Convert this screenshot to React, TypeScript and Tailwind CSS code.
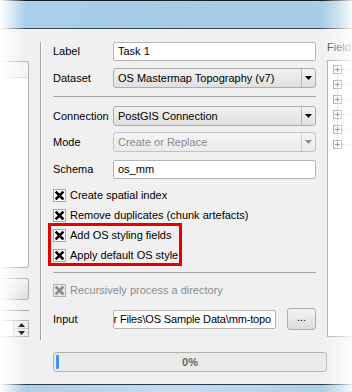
import React from 'react';

function CheckMark({ disabled }: { disabled?: boolean }) {
  return (
    <div
      className={
        'w-[13px] h-[13px] shrink-0 border flex items-center justify-center ' +
        (disabled ? 'border-[#b4b4b4] bg-[#e6e6e6]' : 'border-[#a8a8a8] bg-white')
      }
    >
      <svg width="11" height="11" viewBox="0 0 11 11">
        <path
          d="M2.5 2.5 L8.5 8.5 M8.5 2.5 L2.5 8.5"
          stroke={disabled ? '#8a8a8a' : '#000'}
          strokeWidth="2.5"
          strokeLinecap="square"
        />
      </svg>
    </div>
  );
}

function Check({ label, disabled }: { label: string; disabled?: boolean }) {
  return (
    <div className="flex items-center h-[13px] gap-[4px]">
      <CheckMark disabled={disabled} />
      <span className={'whitespace-nowrap leading-none ' + (disabled ? 'text-[#8d8d8d]' : 'text-black')}>{label}</span>
    </div>
  );
}

function Combo({ text, disabled }: { text: string; disabled?: boolean }) {
  return (
    <div
      className={
        'h-[20px] flex rounded-[3px] border ' +
        (disabled
          ? 'border-[#c3c3c3] bg-linear-to-b from-[#f4f4f4] to-[#ebebeb] text-[#8a8a8a]'
          : 'border-[#acacac] bg-linear-to-b from-[#f2f2f2] to-[#e0e0e0] text-black')
      }
    >
      <div className="flex-1 flex items-center pl-[4px] whitespace-nowrap overflow-hidden">{text}</div>
      <div
        className={
          'w-[14px] flex items-center justify-center border-l ' +
          (disabled ? 'border-[#cfcfcf]' : 'border-[#b9b9b9]')
        }
      >
        <svg width="7" height="4" viewBox="0 0 7 4">
          <path d="M0 0 H7 L3.5 4 Z" fill={disabled ? '#8c8c8c' : '#000'} />
        </svg>
      </div>
    </div>
  );
}

function LineEdit({ children }: { children: React.ReactNode }) {
  return (
    <div className="h-[19px] bg-white border border-[#b5b5b5] rounded-[2px] px-[4px] flex items-center whitespace-nowrap overflow-hidden">
      {children}
    </div>
  );
}

function Row({ label, children, className }: { label: string; children: React.ReactNode; className?: string }) {
  return (
    <div className={'flex items-center ' + (className ?? '')}>
      <div className="w-[60px] shrink-0 whitespace-nowrap">{label}</div>
      <div className="flex-1">{children}</div>
    </div>
  );
}

function TreeItem() {
  return (
    <div className="h-[15px] flex items-center">
      <div className="w-[9px] h-[9px] border border-[#8f8f8f] bg-white flex items-center justify-center relative">
        <div className="absolute w-[5px] h-px bg-[#555]" />
        <div className="absolute w-px h-[5px] bg-[#555]" />
      </div>
      <div className="w-[10px] border-t border-dotted border-[#a0a0a0]" />
    </div>
  );
}

export default function App() {
  return (
    <div className="relative w-[352px] h-[392px] overflow-hidden bg-[#f0f0f0] text-[11px] text-black font-['Liberation_Sans',Arial,sans-serif] flex flex-col">
      {/* window title glass */}
      <div className="h-[29px] shrink-0 border-t border-[#1e1e1e] border-b border-b-[#3b4a58] bg-linear-to-r from-[#a9cfee] via-[#a6cde5] to-[#a8cfe4]" />

      <div className="h-[313px] shrink-0 flex">
        {/* clipped left panel */}
        <div className="w-[29px] shrink-0 flex flex-col">
          <div className="mt-[32px] h-[207px] border border-l-0 border-[#adadad] rounded-r-[3px] bg-white flex flex-col overflow-hidden">
            <div className="h-[16px] bg-[#f4f4f4] border-b border-[#d8d8d8]" />
          </div>
          <div className="mt-[10px] h-[22px] border border-l-0 border-[#acacac] rounded-r-[3px] bg-linear-to-b from-[#f3f3f3] to-[#dedede]" />
          <div className="mt-[10px] h-px bg-[#a0a0a0]" />
          <div className="mt-[9px] h-[17px] flex border border-l-0 border-[#b5b5b5] bg-white">
            <div className="flex-1" />
            <div className="w-[15px] flex flex-col border-l border-[#c8c8c8]">
              <div className="flex-1 flex items-center justify-center bg-[#eeeeee] border-b border-[#c8c8c8]">
                <svg width="7" height="4" viewBox="0 0 7 4">
                  <path d="M0 4 H7 L3.5 0 Z" fill="#000" />
                </svg>
              </div>
              <div className="flex-1 flex items-center justify-center bg-[#eeeeee]">
                <svg width="7" height="4" viewBox="0 0 7 4">
                  <path d="M0 0 H7 L3.5 4 Z" fill="#000" />
                </svg>
              </div>
            </div>
          </div>
        </div>

        {/* splitter line */}
        <div className="ml-[11px] mt-[13px] h-[298px] w-[2px] border-l border-[#a0a0a0] border-r border-r-white" />

        {/* form */}
        <div className="ml-[11px] w-[263px] shrink-0 flex flex-col pt-[13px]">
          <Row label="Label">
            <LineEdit>Task 1</LineEdit>
          </Row>
          <Row label="Dataset" className="mt-[7px]">
            <Combo text="OS Mastermap Topography (v7)" />
          </Row>
          <div className="mt-[8px] h-px bg-[#a8a8a8]" />
          <Row label="Connection" className="mt-[9px]">
            <Combo text="PostGIS Connection" />
          </Row>
          <Row label="Mode" className="mt-[6px]">
            <Combo text="Create or Replace" disabled />
          </Row>
          <Row label="Schema" className="mt-[8px]">
            <LineEdit>os_mm</LineEdit>
          </Row>

          <div className="mt-[10px] flex flex-col gap-[7px]">
            <Check label="Create spatial index" />
            <Check label="Remove duplicates (chunk artefacts)" />
          </div>
          <div className="relative mt-[7px] flex flex-col gap-[7px]">
            <Check label="Add OS styling fields" />
            <Check label="Apply default OS style" />
            <div className="absolute left-[-5px] top-[-6px] w-[134px] h-[43px] border-[3px] border-[#e60000]" />
          </div>

          <div className="mt-[10px] h-px bg-[#a8a8a8]" />
          <div className="mt-[11px]">
            <Check label="Recursively process a directory" disabled />
          </div>

          <div className="mt-[11px] h-[22px] flex items-center">
            <div className="w-[60px] shrink-0">Input</div>
            <div className="w-[163px] h-[19px] bg-white border border-[#b5b5b5] rounded-[2px] pr-[4px] flex items-center justify-end whitespace-nowrap overflow-hidden">
              <span className="shrink-0 tracking-[-0.15px]">er Files\OS Sample Data\mm-topo</span>
            </div>
            <div className="ml-[11px] w-[29px] h-[22px] border border-[#acacac] rounded-[3px] bg-linear-to-b from-[#f3f3f3] to-[#dddddd] flex items-center justify-center pb-[3px]">
              ...
            </div>
          </div>
        </div>

        {/* fields tree */}
        <div className="ml-[11px] flex-1 flex flex-col pt-[12px] overflow-hidden">
          <div className="leading-[13px] text-[#333] whitespace-nowrap">Fields</div>
          <div className="mt-[6px] h-[277px] border-l border-t border-b border-[#a9a9a9] bg-white pl-[5px] pt-[1px] relative">
            <div className="absolute left-[9px] top-[8px] h-[75px] border-l border-dotted border-[#a0a0a0]" />
            <div className="relative flex flex-col">
              <TreeItem />
              <TreeItem />
              <TreeItem />
              <TreeItem />
              <TreeItem />
              <TreeItem />
            </div>
          </div>
        </div>
      </div>

      {/* progress */}
      <div className="ml-[53px] mt-[10px] w-[274px] h-[20px] shrink-0 border border-[#b2b2b2] rounded-[3px] bg-[#eaeaea] relative flex items-center justify-center">
        <div className="absolute left-[2px] top-[2px] bottom-[2px] w-[3px] rounded-[1px] bg-[#3d95ea]" />
        <span className="text-[#666] font-bold">0%</span>
      </div>

      <div className="flex-1" />
      {/* bottom glass */}
      <div className="h-[8px] shrink-0 border-t border-[#2c3844] bg-linear-to-r from-[#aacbe6] via-[#c3ddf2] to-[#a9cce6]" />

      {/* edge fades */}
      <div className="absolute inset-y-0 left-0 w-[26px] bg-linear-to-r from-white via-white/50 to-transparent pointer-events-none" />
      <div className="absolute inset-y-0 right-0 w-[30px] bg-linear-to-l from-white/90 via-white/40 to-transparent pointer-events-none" />
    </div>
  );
}
